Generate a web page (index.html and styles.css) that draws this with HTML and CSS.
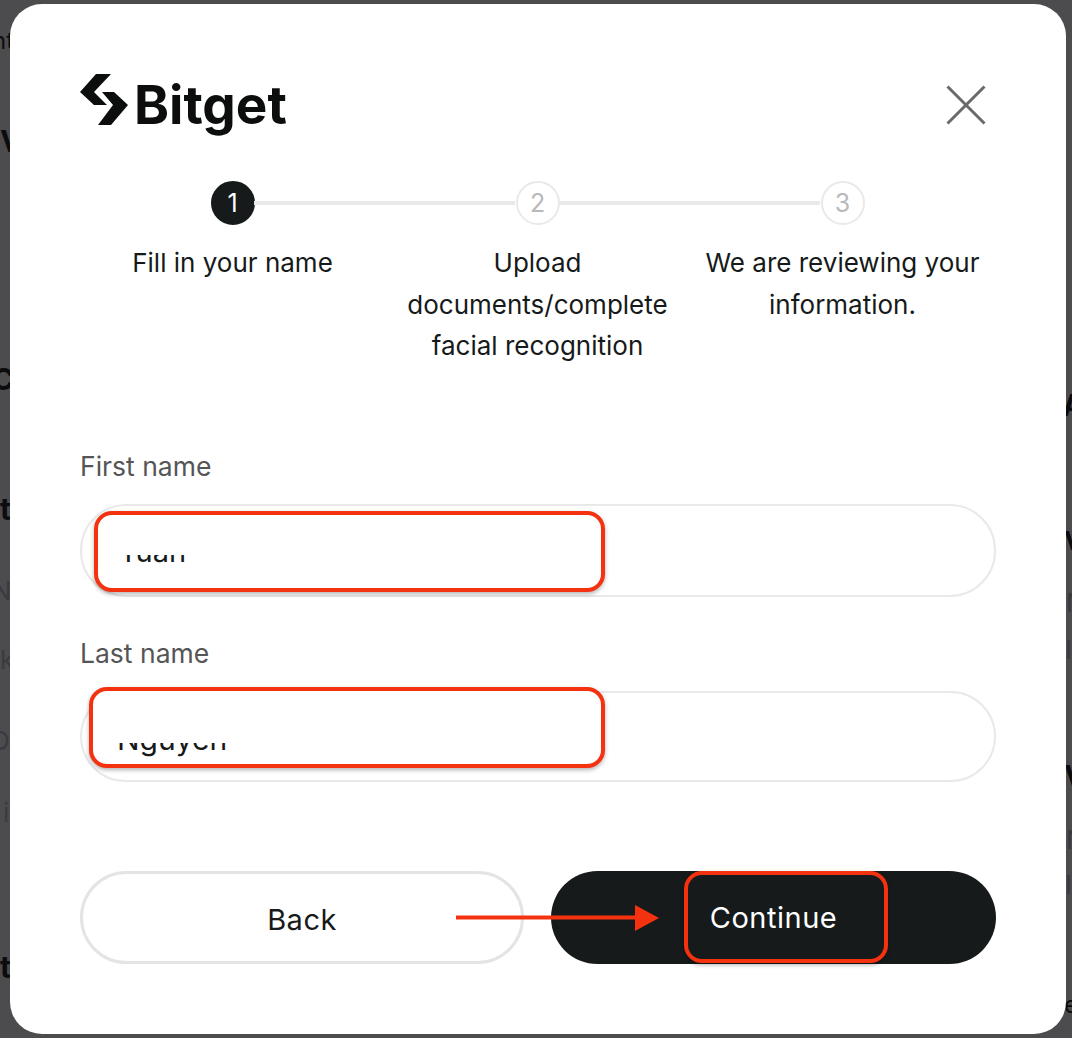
FILE: index.html
```html
<!DOCTYPE html>
<html lang="en">
<head>
<meta charset="utf-8">
<title>Bitget identity verification</title>
<link rel="stylesheet" href="styles.css">
</head>
<body>
<div class="backdrop" aria-hidden="true">
  <span class="frag f1">nt</span><span class="frag f2">V</span><span class="frag f3">C</span>
  <span class="frag f4">t</span><span class="frag f5 faint">N</span><span class="frag f6 faint">k</span>
  <span class="frag f7 faint">O</span><span class="frag f8 faint">i</span><span class="frag f9">t</span>
  <span class="frag r1">A</span><span class="frag r2 faint">V</span><span class="frag r3 faint">N</span><span class="frag r6 faint">I</span>
  <span class="frag r4">V</span><span class="frag r7 faint">N</span><span class="frag r8 faint">I</span><span class="frag r5">e</span>
</div>
<main class="modal">
  <header class="modal-head">
    <div class="logo">
      <svg class="logo-mark" viewBox="0 0 48 52" width="48" height="52"><path d="M31 0H16L0 18 14 31H27L14 18Z"/><path d="M22 18H34L48 31 31 51H18L33 31Z"/></svg>
      <span class="logo-word">Bitget</span>
    </div>
    <button class="close" aria-label="Close">
      <svg viewBox="0 0 40 40" width="40" height="40"><path d="M1.5 1.5 38.5 38.5M38.5 1.5 1.5 38.5"/></svg>
    </button>
  </header>

  <ol class="stepper">
    <li class="step active"><span class="dot">1</span><span class="step-label">Fill in your name</span></li>
    <li class="step"><span class="dot">2</span><span class="step-label">Upload documents/complete facial recognition</span></li>
    <li class="step"><span class="dot">3</span><span class="step-label">We are reviewing your information.</span></li>
  </ol>

  <form class="form">
    <label class="field-label first">First name</label>
    <div class="input tall">
      <div class="mark mark-first"><span class="clip"><span class="clip-text">Tuan</span></span></div>
    </div>
    <label class="field-label second">Last name</label>
    <div class="input">
      <div class="mark mark-last"><span class="clip clip-low"><span class="clip-text">Nguyen</span></span></div>
    </div>
    <div class="actions">
      <button type="button" class="btn btn-back">Back</button>
      <button type="button" class="btn btn-next">Continue</button>
      <span class="mark-next"></span>
      <svg class="arrow" viewBox="0 0 204 28" width="204" height="28"><path d="M0 11.5H180V15.5H0Z"/><path d="M179 1 203 14 179 27Z"/></svg>
    </div>
  </form>
</main>
</body>
</html>
```
FILE: styles.css
```css
* { box-sizing: border-box; }
html, body { margin: 0; height: 1038px; overflow: hidden; }
body {
  position: relative;
  background: #4c4c4e;
  font-family: Inter, "Liberation Sans", sans-serif;
  color: #161a1a;
  padding: 4px 6px 4px 10px;
}
.backdrop { position: absolute; inset: 0; }
.frag { position: absolute; font-size: 30px; line-height: 34px; font-weight: 700; color: #0c0c0e; }
.faint { font-weight: 400; font-size: 26px; color: #3a3a3e; }
.f1 { left: -8px; top: 24px; font-weight: 400; font-size: 24px; }
.f2 { left: 0; top: 124px; }
.f3 { left: -8px; top: 362px; }
.f4 { left: 0; top: 492px; }
.f5 { left: -8px; top: 574px; }
.f6 { left: 0; top: 643px; }
.f7 { left: -10px; top: 724px; }
.f8 { left: 3px; top: 796px; }
.f9 { left: 0; top: 950px; }
.r1 { left: 1062px; top: 388px; }
.r2 { left: 1064px; top: 524px; font-weight: 700; color: #0c0c0e; }
.r3 { left: 1066px; top: 586px; }
.r6 { left: 1065px; top: 633px; }
.r4 { left: 1064px; top: 759px; }
.r7 { left: 1066px; top: 823px; }
.r8 { left: 1065px; top: 868px; }
.r5 { left: 1064px; top: 988px; font-size: 24px; font-weight: 400; }

.modal {
  position: relative;
  height: 1030px;
  background: #fff;
  border-radius: 32px;
  padding: 70px 70px 0;
}
.modal-head { display: flex; justify-content: space-between; align-items: flex-start; height: 62px; }
.logo { display: flex; align-items: flex-start; gap: 6px; }
.logo-mark { display: block; fill: #0c0e0e; }
.logo-word {
  font-size: 53px;
  line-height: 62px;
  font-weight: 700;
  color: #0c0e0e;
}
.close { border: 0; background: none; padding: 0; margin: 11px 10px 0 0; width: 40px; height: 40px; }
.close svg { display: block; fill: none; stroke: #6a6a6a; stroke-width: 3; }

.stepper { list-style: none; margin: 45px 0 0; padding: 0; display: grid; grid-template-columns: repeat(3, 305px); }
.step { position: relative; display: flex; flex-direction: column; align-items: center; }
.step + .step::before {
  content: "";
  position: absolute;
  left: -131px;
  width: 261px;
  top: 20px;
  height: 4px;
  background: #e9e9e9;
}
.dot {
  width: 44px;
  height: 44px;
  border-radius: 50%;
  border: 2px solid #e9e9e9;
  background: #fff;
  color: #b9b9b9;
  display: flex;
  align-items: center;
  justify-content: center;
  font-size: 25px;
}
.active .dot { background: #161a1a; border-color: #161a1a; color: #fff; }
.step-label {
  margin-top: 17px;
  font-size: 26px;
  line-height: 41.5px;
  text-align: center;
  width: 290px;
}

.form { display: block; }
.field-label { display: block; font-size: 26.5px; line-height: 30px; color: #555; }
.first { margin-top: 84px; }
.second { margin-top: 41px; }
.input {
  position: relative;
  margin-top: 23px;
  height: 91px;
  border: 2px solid #e9e9e9;
  border-radius: 46px;
}
.tall { height: 93px; }
.mark {
  position: absolute;
  background: #fff;
  border: 4px solid #f5320f;
  border-radius: 18px;
  box-shadow: 0 2px 4px rgba(0, 0, 0, .3);
  width: 511px;
  height: 81px;
}
.mark-first { left: 12px; top: 5px; }
.mark-last { left: 7px; top: -6px; width: 516px; }
.clip { display: block; overflow: hidden; height: 10px; margin: 40px 0 0 21px; }
.clip-low { margin-top: 52px; margin-left: 24px; height: 14px; }
.clip-text { display: block; font-size: 29px; line-height: 30px; margin-top: -18px; color: #161a1a; }
.clip-low .clip-text { margin-top: -19px; font-size: 30px; }

.actions { position: relative; display: grid; grid-template-columns: 444px 445px; gap: 27px; margin-top: 89px; }
.btn {
  height: 93px;
  padding: 0;
  border-radius: 47px;
  font: 400 29px Inter, "Liberation Sans", sans-serif;
  letter-spacing: .5px;
}
.btn-back { border: 3px solid #e4e4e4; background: #fff; color: #161a1a; padding-top: 4px; }
.btn-next { border: 0; background: #161a1a; color: #fff; }
.mark-next {
  position: absolute;
  left: 604px;
  top: 0;
  width: 204px;
  height: 92px;
  border: 4px solid #f5320f;
  border-radius: 18px;
  box-shadow: 0 2px 4px rgba(0, 0, 0, .3);
}
.arrow { position: absolute; left: 376px; top: 33px; fill: #f5320f; }
```
